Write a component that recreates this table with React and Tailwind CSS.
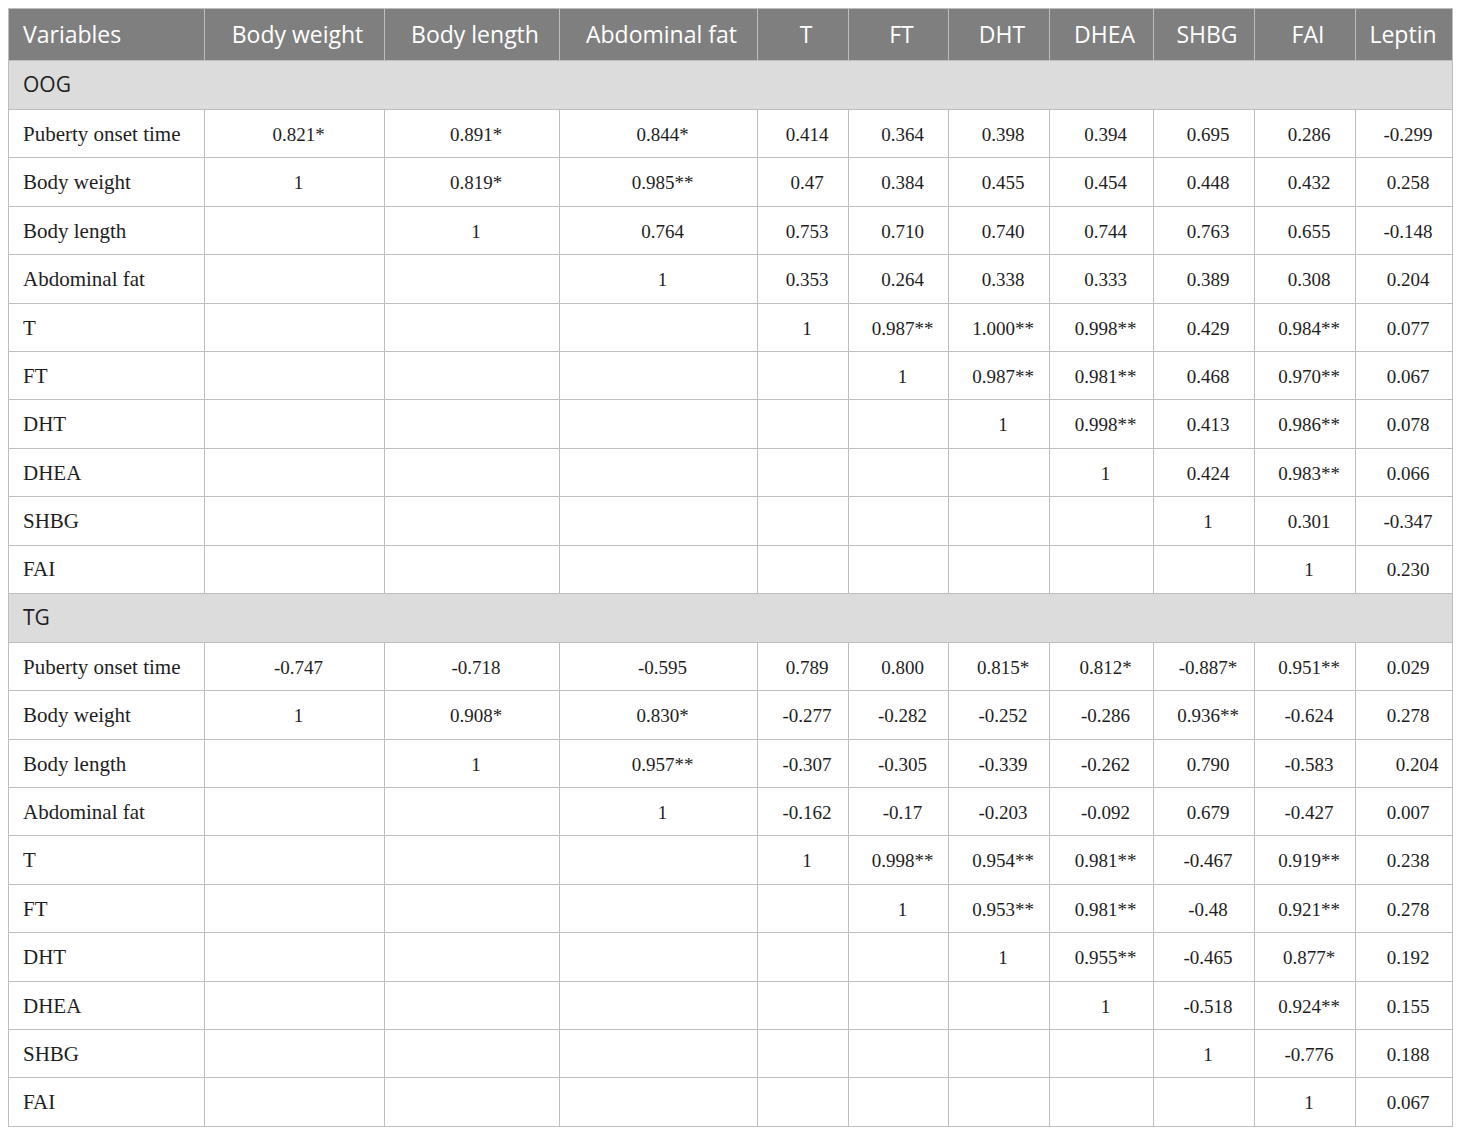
const headers = ['Body weight', 'Body length', 'Abdominal fat', 'T', 'FT', 'DHT', 'DHEA', 'SHBG', 'FAI', 'Leptin'];
const widths = [196, 180, 175, 198, 91, 100, 101, 104, 101, 101, 97];

const groups = [
  {
    name: 'OOG',
    rows: [
      ['Puberty onset time', '0.821*', '0.891*', '0.844*', '0.414', '0.364', '0.398', '0.394', '0.695', '0.286', '-0.299'],
      ['Body weight', '1', '0.819*', '0.985**', '0.47', '0.384', '0.455', '0.454', '0.448', '0.432', '0.258'],
      ['Body length', '', '1', '0.764', '0.753', '0.710', '0.740', '0.744', '0.763', '0.655', '-0.148'],
      ['Abdominal fat', '', '', '1', '0.353', '0.264', '0.338', '0.333', '0.389', '0.308', '0.204'],
      ['T', '', '', '', '1', '0.987**', '1.000**', '0.998**', '0.429', '0.984**', '0.077'],
      ['FT', '', '', '', '', '1', '0.987**', '0.981**', '0.468', '0.970**', '0.067'],
      ['DHT', '', '', '', '', '', '1', '0.998**', '0.413', '0.986**', '0.078'],
      ['DHEA', '', '', '', '', '', '', '1', '0.424', '0.983**', '0.066'],
      ['SHBG', '', '', '', '', '', '', '', '1', '0.301', '-0.347'],
      ['FAI', '', '', '', '', '', '', '', '', '1', '0.230'],
    ],
  },
  {
    name: 'TG',
    rows: [
      ['Puberty onset time', '-0.747', '-0.718', '-0.595', '0.789', '0.800', '0.815*', '0.812*', '-0.887*', '0.951**', '0.029'],
      ['Body weight', '1', '0.908*', '0.830*', '-0.277', '-0.282', '-0.252', '-0.286', '0.936**', '-0.624', '0.278'],
      ['Body length', '', '1', '0.957**', '-0.307', '-0.305', '-0.339', '-0.262', '0.790', '-0.583', ' 0.204'],
      ['Abdominal fat', '', '', '1', '-0.162', '-0.17', '-0.203', '-0.092', '0.679', '-0.427', '0.007'],
      ['T', '', '', '', '1', '0.998**', '0.954**', '0.981**', '-0.467', '0.919**', '0.238'],
      ['FT', '', '', '', '', '1', '0.953**', '0.981**', '-0.48', '0.921**', '0.278'],
      ['DHT', '', '', '', '', '', '1', '0.955**', '-0.465', '0.877*', '0.192'],
      ['DHEA', '', '', '', '', '', '', '1', '-0.518', '0.924**', '0.155'],
      ['SHBG', '', '', '', '', '', '', '', '1', '-0.776', '0.188'],
      ['FAI', '', '', '', '', '', '', '', '', '1', '0.067'],
    ],
  },
];

const sans = "font-['Open_Sans','Noto_Sans',sans-serif]";
const serif = "font-['Liberation_Serif','DejaVu_Serif',serif]";

export default function App() {
  return (
    <div className="bg-white min-h-[1134px] pt-2 pl-2">
      <table className="table-fixed border-collapse w-[1445px] text-[#1e1e1e]">
        <colgroup>
          {widths.map((w, i) => (
            <col key={i} style={{ width: w }} />
          ))}
        </colgroup>
        <thead>
          <tr className="h-[52px] bg-[#7f7f7f] text-white">
            <th className={`${sans} border border-[#bdbdbd] px-[14px] text-left text-[23px] font-normal`}>Variables</th>
            {headers.map((h) => (
              <th
                key={h}
                className={`${sans} border border-[#bdbdbd] pr-1 text-center text-[23px] font-normal whitespace-nowrap ${h === 'Leptin' ? 'pl-[2px]' : 'pl-[10px]'}`}
              >
                {h}
              </th>
            ))}
          </tr>
        </thead>
        <tbody>
          {groups.map((g) => (
            <Group key={g.name} group={g} />
          ))}
        </tbody>
      </table>
    </div>
  );
}

function Group({ group }) {
  return (
    <>
      <tr className="h-[49px] bg-[#dcdcdc]">
        <td colSpan={11} className={`${sans} border border-[#bdbdbd] px-[14px] text-[21px]`}>
          {group.name}
        </td>
      </tr>
      {group.rows.map((row, r) => (
        <tr key={r} className="h-[48.4px]">
          {row.map((cell, c) =>
            c === 0 ? (
              <td key={c} className={`${serif} border border-[#bdbdbd] px-[14px] pt-[2px] text-left text-[21px]`}>
                {cell}
              </td>
            ) : (
              <td
                key={c}
                className={`${serif} border border-[#bdbdbd] pt-[3px] text-center text-[19px] ${cell.startsWith(' ') ? 'pl-[26px]' : 'pl-[8px]'}`}
              >
                {cell.trim()}
              </td>
            )
          )}
        </tr>
      ))}
    </>
  );
}
